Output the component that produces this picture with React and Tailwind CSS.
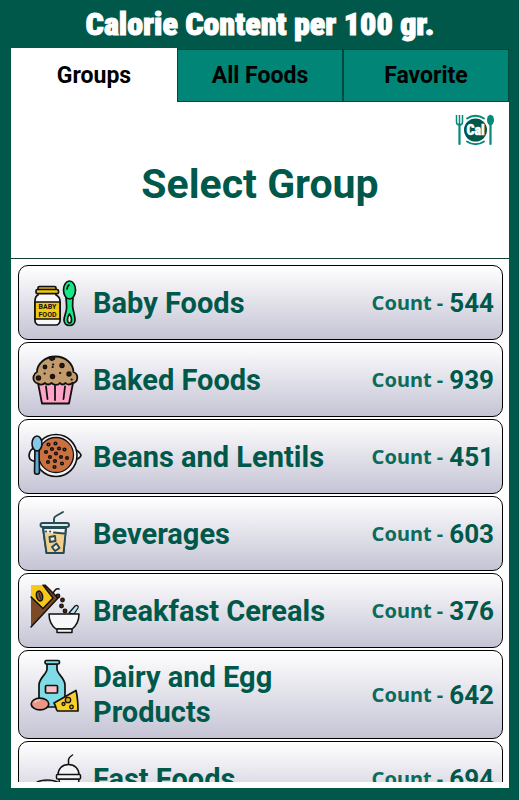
import { useState } from 'react';

const TABS = ['Groups', 'All Foods', 'Favorite'];

function BabyFoodIcon() {
    return (
        <svg viewBox="7 5 60 60" className="w-full h-full" fill="none" stroke="#111" strokeWidth="1.7" strokeLinejoin="round" strokeLinecap="round">
            <path d="M18 27h18v2c2 1 4 3 4 6v20c0 2-2 4-4 4H19c-2 0-4-2-4-4V35c0-3 1-5 3-6z" fill="#f8f8fa" />
            <path d="M15 36h25v17H15z" fill="#f2c811" />
            <rect x="18" y="20.5" width="18" height="4" rx="1.5" fill="#d9b010" />
            <rect x="16" y="23.5" width="22.5" height="4.2" rx="1.5" fill="#f2c811" />
            <text x="27.5" y="43.4" textAnchor="middle" fontFamily="Roboto, sans-serif" fontWeight="700" fontSize="7" fill="#111" stroke="none">BABY</text>
            <text x="27.5" y="51" textAnchor="middle" fontFamily="Roboto, sans-serif" fontWeight="700" fontSize="7" fill="#111" stroke="none">FOOD</text>
            <path d="M46 31h7c0 5-1 8 0 12 1 4 2 8 2 11 0 3-2 5.500-5.500 5.500S44 57 44 54c0-3 2-7 2.500-11 .5-4-.5-8-.5-12z" fill="#14e887" />
            <ellipse cx="49.500" cy="24" rx="6" ry="9" fill="#14e887" />
            <path d="M49.500 48c1.500 2 2 3 2 5.500 0 2-.8 3.500-2 3.500s-2-1.500-2-3.500c0-2.500.5-3.500 2-5.500z" fill="#eee" />
            <path d="M47 23c0-2 .6-3 2-4" />
        </svg>
    );
}

function BakedIcon() {
    return (
        <svg viewBox="7 5 60 60" className="w-full h-full" fill="none" stroke="#111" strokeWidth="1.8" strokeLinejoin="round" strokeLinecap="round">
            <path d="M18 40h35l-4 20.500H22z" fill="#ffa3c7" />
            <path d="M35 43v14M26 43.500l1.500 12.500M45 43.500L43.500 56" />
            <path d="M18 40.500c-4-1-5-4-4.500-7C14 31 15 30 17 29c0-8 8-15.500 18.500-15.500S53 21 53.500 29c2.500 1 4 3 3.800 6-.3 3-2.300 5-5 5-2 2-5 2-6.800 0-2 2-4 2-5.500 0-2 2.500-6 2.500-8.500 0-2 2-5 2-6.500 0-2 2-5 2-7 .5z" fill="#c39a6b" />
            <g fill="#2c1a10" strokeWidth="1.400">
                <circle cx="25" cy="24" r="1.700" />
                <circle cx="42" cy="22.500" r="2" />
                <circle cx="18.500" cy="35" r="2" />
                <circle cx="32.500" cy="33.500" r="2" />
                <circle cx="49" cy="31" r="2" />
                <path d="M29.500 14h5v2c-2 2-4 1.500-5-.5z" />
            </g>
            <path d="M32.500 24h.3M24.500 30.500h.3M40 30h.3M51.500 36.500h.3M33 21.500h.3" strokeWidth="2" />
        </svg>
    );
}

const BEANS = [[28.5, 24.5], [35.5, 23.5], [32, 29], [39, 28.5], [26, 32], [44.5, 29.5], [36, 33.5], [30, 37], [41, 37], [47, 38], [28, 42], [35, 41], [42, 43.5], [34.5, 47]];

function BeansIcon() {
    return (
        <svg viewBox="7 5 60 60" className="w-full h-full" fill="none" stroke="#111" strokeWidth="1.600" strokeLinecap="round" strokeLinejoin="round">
            <path d="M16 27c-7 2-8 9-6 12 1.500 2 5 2 8 4zM54 27c1 4 6 4 7 8 0 4-6 3-9 9z" fill="#f1f1f4" />
            <circle cx="36" cy="35.500" r="21" fill="#f1f1f4" />
            <circle cx="36" cy="35" r="17.500" fill="#cb7040" strokeWidth="1.300" />
            {BEANS.map(([cx, cy]) => (
                <circle key={`${cx}-${cy}`} cx={cx} cy={cy} r="1.300" fill="#b9812a" strokeWidth="1.600" />
            ))}
            <path d="M15 29h4l.5 23c0 3-5 3-5 0z" fill="#5fa9d3" />
            <ellipse cx="17" cy="23.500" rx="5" ry="7.500" fill="#86c8ec" />
        </svg>
    );
}

function BeverageIcon() {
    return (
        <svg viewBox="7 5 60 60" className="w-full h-full" fill="none" stroke="#284a54" strokeWidth="1.900" strokeLinecap="round" strokeLinejoin="round">
            <path d="M23 31h23l-2.500 25h-17z" fill="#f3f1ec" />
            <path d="M24 37c3-3 6 0 10-1s7 0 11 1l-2 18.500H27z" fill="#f3cf8c" stroke="none" />
            <path d="M23 31h23l-2.500 25h-17z" />
            <path d="M34 26v-4c0-2 1-2.500 2-3l7-4" />
            <rect x="20.500" y="26" width="28.500" height="4" rx="2" fill="#d6ebe6" />
            <path d="M29.500 40l5.500-1 .5 5-5.500 1zM32 50l4.500-3.500 3 4.500-4.500 3z" fill="#f6e9d2" />
            <path d="M26 34.500h.2M30 34.500h.2M34 35.500l10 1" />
        </svg>
    );
}

function CerealIcon() {
    return (
        <svg viewBox="7 6 60 60" className="w-full h-full" fill="none" stroke="#111" strokeWidth="1.500" strokeLinecap="round" strokeLinejoin="round">
            <path d="M11 12h14l13 13-27 29z" fill="#7d4a26" stroke="none" />
            <path d="M11 12h12l10 13-10 10.500L11 23z" fill="#f6c81c" stroke="none" />
            <path d="M23 12l10 13-10 10.500L11 24M25 12l13 13-27 29" />
            <ellipse cx="19.500" cy="23" rx="3" ry="5" fill="#8a5a32" transform="rotate(-14 19.500 23)" />
            <path d="M19 20c1.500 2 .5 4 1.500 6" strokeWidth="1" />
            <path d="M33 20c2-3 3-5 6-4" />
            <g fill="#4a2618" strokeWidth="1.200">
                <circle cx="38" cy="23" r="1.800" />
                <circle cx="42.500" cy="27" r="1.800" />
                <circle cx="41.500" cy="33" r="1.800" />
                <circle cx="45" cy="38" r="1.800" />
            </g>
            <path d="M49 40l6-7c2-1.500 4 0 3 2l-4 6z" fill="#b9e3ee" strokeWidth="1.200" />
            <path d="M29 41h30c0 8-3 12-7 15H36c-4-3-7-7-7-15z" fill="#f7f7f9" />
            <path d="M37 56h15v3.500H37z" fill="#f7f7f9" />
        </svg>
    );
}

function DairyIcon() {
    return (
        <svg viewBox="7 6 60 60" className="w-full h-full" fill="none" stroke="#111" strokeWidth="1.700" strokeLinecap="round" strokeLinejoin="round">
            <path d="M27 14h10v5c0 5 8 9 8 16v19c0 2-1.500 3-3 3H22c-2 0-3-1-3-3V35c0-7 8-11 8-16z" fill="#7fdbe6" />
            <rect x="25" y="10.500" width="14.500" height="3.500" rx="1.500" fill="#7fdbe6" />
            <rect x="25.500" y="35.500" width="12" height="7.500" rx="1" fill="#f8bfc8" />
            <ellipse cx="20" cy="54" rx="8.800" ry="5.800" fill="#e99786" />
            <path d="M15 52c1-1.500 3-2 4.500-2" stroke="#f8c8bd" />
            <path d="M34 53l22-12.500c1.500 6 2 12 2 20.500H37.500c-2-2-1-4-3.500-8z" fill="#f9cf2c" />
            <g fill="#dfa912" strokeWidth="1.300">
                <circle cx="48" cy="50" r="2.700" />
                <circle cx="43.500" cy="54" r="1.500" />
                <circle cx="51.500" cy="57" r="1.800" />
            </g>
        </svg>
    );
}

function FastFoodIcon() {
    return (
        <svg viewBox="7 -2 60 60" className="w-full h-full" fill="none" stroke="#111" strokeWidth="1.500" strokeLinecap="round" strokeLinejoin="round">
            <path d="M39 30h20l-3 26H42z" fill="#f3f3f5" />
            <path d="M39 33h20l-2 14H41z" fill="#d9553c" stroke="none" />
            <path d="M12 38c3-5 8-7 15-7s13 2 15 7z" fill="#f3b78f" />
            <path d="M11 38h32v5H11z" fill="#7cb342" />
            <path d="M12 43h30v5c0 3-2 4-4 4H16c-2 0-4-1-4-4z" fill="#f3b78f" />
            <path d="M38 26c0-6 4-10.500 10.500-10.500S59 20 59 26z" fill="#f3f3f5" />
            <rect x="36.500" y="25.500" width="24" height="4.500" rx="1" fill="#f3f3f5" />
            <path d="M48.500 15v-4c0-2 1-3 4-5M20 34.500h.2M25 33.500h.2M30 34.500h.2" />
        </svg>
    );
}

function PlateLogo() {
    return (
        <svg viewBox="0 0 40 32" className="w-10 h-8" role="img" aria-label="Cal">
            <path d="M12 4.500a14.500 14.500 0 0 1 17 0M12 27.500a14.500 14.500 0 0 0 17 0" fill="none" stroke="#06897a" strokeWidth="1.900" strokeLinecap="round" />
            <circle cx="20.500" cy="16" r="11.500" fill="#00584a" />
            <path d="M1.500 1v7c0 2 1 3 3 3s3-1 3-3V1M4.500 1v10" fill="none" stroke="#06897a" strokeWidth="1.500" />
            <path d="M4.500 10v20M35.500 10v20" stroke="#06897a" strokeWidth="2.200" strokeLinecap="round" />
            <ellipse cx="35.500" cy="6" rx="3.500" ry="5.200" fill="#06897a" />
            <text x="20.500" y="21" textAnchor="middle" fontFamily="Impact, 'Roboto Condensed', sans-serif" fontWeight="900" fontSize="14" fill="#fff" stroke="#fff" strokeWidth=".4">Cal</text>
        </svg>
    );
}

const GROUPS = [
    { name: 'Baby Foods', count: 544, Icon: BabyFoodIcon },
    { name: 'Baked Foods', count: 939, Icon: BakedIcon },
    { name: 'Beans and Lentils', count: 451, Icon: BeansIcon },
    { name: 'Beverages', count: 603, Icon: BeverageIcon },
    { name: 'Breakfast Cereals', count: 376, Icon: CerealIcon },
    { name: 'Dairy and Egg Products', count: 642, Icon: DairyIcon },
    { name: 'Fast Foods', count: 694, Icon: FastFoodIcon },
];

function GroupRow({ name, count, Icon }) {
    return (
        <li className="shrink-0">
            <button type="button" className="w-full min-h-[75px] flex items-center gap-[6px] pt-[9px] pb-2 px-2 text-left rounded-[10px] border border-black bg-gradient-to-b from-white to-[#c5c4d5]">
                <span className="w-[60px] h-[60px] -my-1 shrink-0 self-start">
                    <Icon />
                </span>
                <span className="flex-1 text-[29px] leading-[35px] font-bold text-[#00584a]">{name}</span>
                <span className="flex items-center gap-[6px] shrink-0 text-[#00584a]">
                    <span className="font-['Noto_Sans',sans-serif] text-[20px] leading-8 font-bold text-[#0d6b5c]">Count -</span>
                    <span className="text-[26px] leading-8 font-bold">{count}</span>
                </span>
            </button>
        </li>
    );
}

export default function App() {
    const [active, setActive] = useState('Groups');

    return (
        <div className="h-screen flex flex-col bg-[#00584a] pl-[11px] pr-[10px] pb-3 font-['Roboto',sans-serif]">
            <h1 className="h-12 shrink-0 flex items-center justify-center text-white text-[32px] leading-8 font-black whitespace-nowrap font-['Impact','Roboto_Condensed','Roboto',sans-serif] [-webkit-text-stroke:1px_white]">
                Calorie Content per 100 gr.
            </h1>

            {/* Tabs */}
            <div role="tablist" className="h-[54px] shrink-0 grid grid-cols-3 items-end">
                {TABS.map((tab) => (
                    <button
                        key={tab}
                        type="button"
                        role="tab"
                        aria-selected={active === tab}
                        onClick={() => setActive(tab)}
                        className={`pt-[2px] text-[23px] font-bold text-black ${active === tab ? 'h-full bg-white' : 'h-[53px] bg-[#008577] border border-[#00493d]'}`}
                    >
                        {tab}
                    </button>
                ))}
            </div>

            {/* Panel */}
            <main className="flex-1 min-h-0 flex flex-col bg-white pb-[6px]">
                <header className="flex flex-col items-center pt-3 pb-[50px] border-b border-[#12402f]">
                    <div className="self-end mr-[14px]">
                        <PlateLogo />
                    </div>
                    <h2 className="mt-[14px] text-[41px] leading-[48px] font-bold text-[#00584a]">Select Group</h2>
                </header>
                <ul className="flex-1 min-h-0 overflow-hidden flex flex-col gap-[2px] pt-[6px] pl-[7px] pr-[6px]">
                    {GROUPS.map((group) => (
                        <GroupRow key={group.name} {...group} />
                    ))}
                </ul>
            </main>
        </div>
    );
}
